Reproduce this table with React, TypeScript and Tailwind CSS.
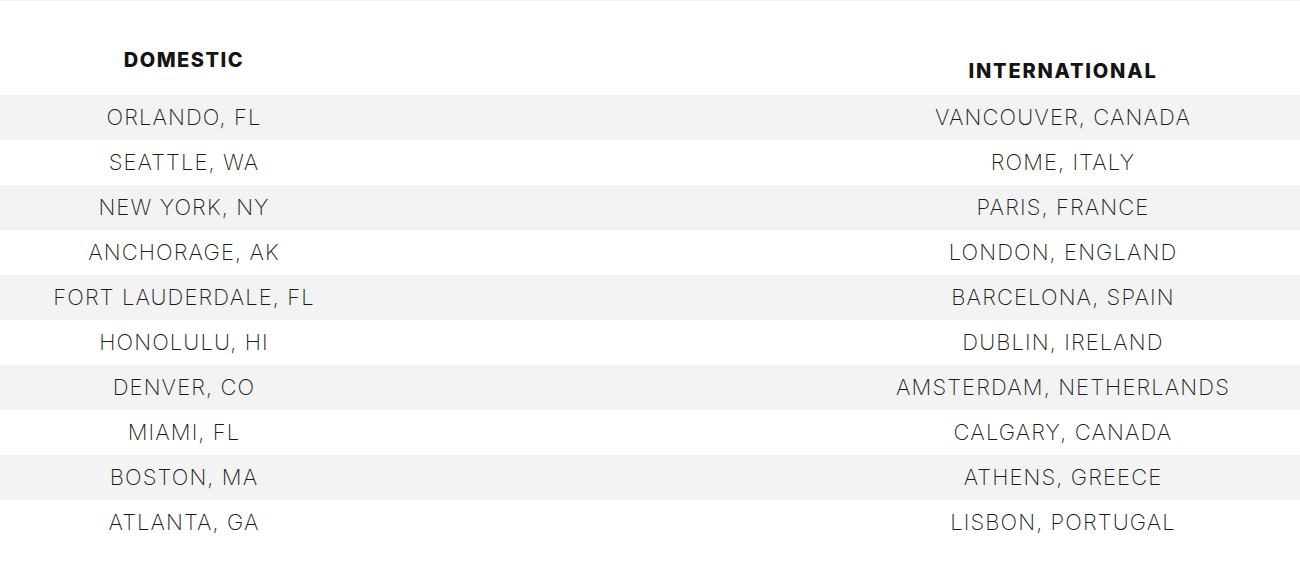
import React from "react";

const domestic = [
  "ORLANDO, FL",
  "SEATTLE, WA",
  "NEW YORK, NY",
  "ANCHORAGE, AK",
  "FORT LAUDERDALE, FL",
  "HONOLULU, HI",
  "DENVER, CO",
  "MIAMI, FL",
  "BOSTON, MA",
  "ATLANTA, GA",
];

const international = [
  "VANCOUVER, CANADA",
  "ROME, ITALY",
  "PARIS, FRANCE",
  "LONDON, ENGLAND",
  "BARCELONA, SPAIN",
  "DUBLIN, IRELAND",
  "AMSTERDAM, NETHERLANDS",
  "CALGARY, CANADA",
  "ATHENS, GREECE",
  "LISBON, PORTUGAL",
];

export default function App() {
  return (
    <div className="w-[1300px] h-[563px] bg-white border-t border-[#f6f6f6] font-['Inter','Liberation_Sans',sans-serif]">
      <div className="grid grid-cols-[368px_1fr_474px] h-[94px]">
        <div className="flex items-end justify-center pb-[20px] text-[20px] font-extrabold text-[#141414] tracking-[1.5px]">
          DOMESTIC
        </div>
        <div />
        <div className="flex items-end justify-center pb-[9px] text-[20px] font-extrabold text-[#141414] tracking-[1.8px]">
          INTERNATIONAL
        </div>
      </div>
      <div className="flex flex-col">
        {domestic.map((d, i) => (
          <div
            key={d}
            className={`grid grid-cols-[368px_1fr_474px] h-[45px] items-center text-[22px] font-extralight tracking-[1.1px] text-[#1a1a1a] ${
              i % 2 === 0 ? "bg-[#f3f3f3]" : "bg-white"
            }`}
          >
            <div className="text-center">{d}</div>
            <div />
            <div className="text-center">{international[i]}</div>
          </div>
        ))}
      </div>
    </div>
  );
}
